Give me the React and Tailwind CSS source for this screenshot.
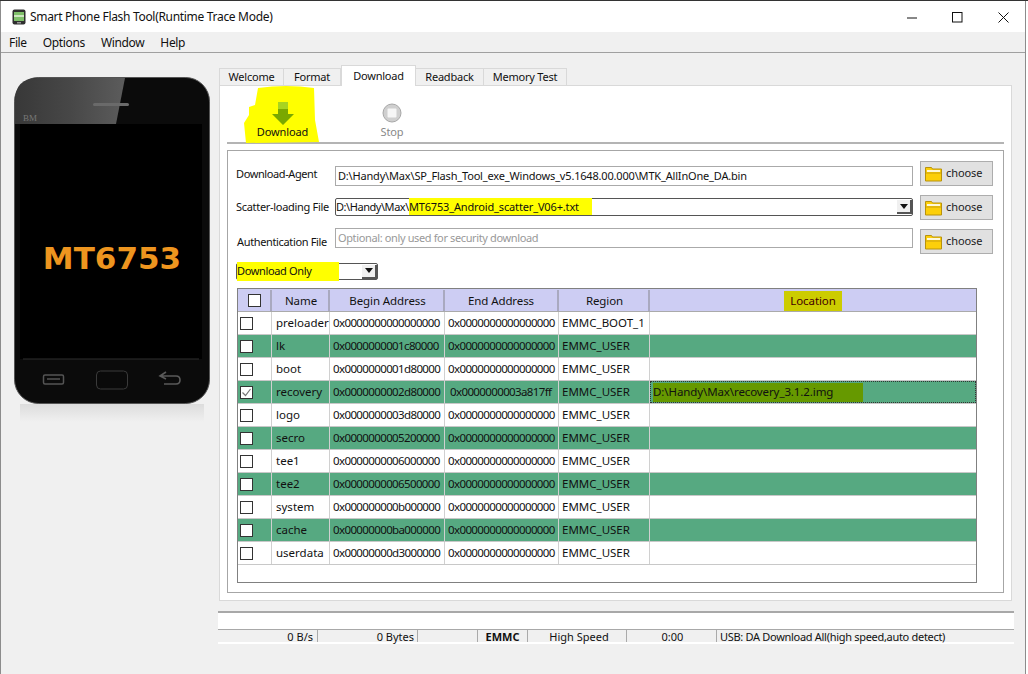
import React from "react";

const rows = [
  ["preloader", "0x0000000000000000", "0x0000000000000000", "EMMC_BOOT_1"],
  ["lk", "0x0000000001c80000", "0x0000000000000000", "EMMC_USER"],
  ["boot", "0x0000000001d80000", "0x0000000000000000", "EMMC_USER"],
  ["recovery", "0x0000000002d80000", "0x0000000003a817ff", "EMMC_USER", "D:\\Handy\\Max\\recovery_3.1.2.img"],
  ["logo", "0x0000000003d80000", "0x0000000000000000", "EMMC_USER"],
  ["secro", "0x0000000005200000", "0x0000000000000000", "EMMC_USER"],
  ["tee1", "0x0000000006000000", "0x0000000000000000", "EMMC_USER"],
  ["tee2", "0x0000000006500000", "0x0000000000000000", "EMMC_USER"],
  ["system", "0x000000000b000000", "0x0000000000000000", "EMMC_USER"],
  ["cache", "0x00000000ba000000", "0x0000000000000000", "EMMC_USER"],
  ["userdata", "0x00000000d3000000", "0x0000000000000000", "EMMC_USER"],
];

const FONT = "font-['Noto_Sans','Liberation_Sans',sans-serif]";
const COLS = "grid grid-cols-[34px_58px_115px_114px_91px_1fr]";

function Folder() {
  return (
    <svg width="17" height="16" viewBox="0 0 17 16">
      <path d="M0.5 1.5h6l1 1.5h9v12h-16z" fill="#fccf0a" stroke="#b8920c" />
      <path d="M2 4h13v2H2z" fill="#fff8d8" />
      <path d="M1 7h15" stroke="#c9a010" />
    </svg>
  );
}

function Choose() {
  return (
    <button className="w-[73px] h-[25px] bg-[#e1e1e1] border border-[#adadad] flex items-center pl-[4px] gap-[4px] text-[11px] tracking-[-0.1px] text-[#222]">
      <Folder />
      <span>choose</span>
    </button>
  );
}

function Check({ checked }) {
  return (
    <div className="w-[13px] h-[13px] border border-[#333] bg-white flex items-center justify-center">
      {checked && (
        <svg width="11" height="11" viewBox="0 0 11 11">
          <path d="M1.5 5.5l3 3 5-6.5" fill="none" stroke="#777" strokeWidth="1.2" />
        </svg>
      )}
    </div>
  );
}

function Arrow() {
  return (
    <div className="w-[15px] h-[14px] bg-[#f0f0f0] border-r-2 border-b-2 border-[#555] flex items-center justify-center">
      <svg width="8" height="5" viewBox="0 0 8 5">
        <path d="M0 0h8L4 5z" fill="#111" />
      </svg>
    </div>
  );
}

function Phone() {
  return (
    <div className="relative w-[196px] h-[345px]">
      <svg width="196" height="345" viewBox="0 0 196 345" className="block">
        <defs>
          <linearGradient id="refl" x1="0" y1="0" x2="0" y2="1">
            <stop offset="0" stopColor="#dcdcdc" />
            <stop offset="1" stopColor="#f0f0f0" />
          </linearGradient>
          <linearGradient id="shine" x1="0" y1="0" x2="1" y2="0">
            <stop offset="0" stopColor="#383838" />
            <stop offset="0.5" stopColor="#474747" />
            <stop offset="1" stopColor="#5c5c5c" />
          </linearGradient>
        </defs>
        <path d="M6 327h184v18H6z" fill="url(#refl)" />
        <rect x="0.5" y="0.5" width="195" height="326" rx="24" fill="#0b0b0b" stroke="#555" />
        <path d="M1 47V24Q1 1 24 1h87l-9 46z" fill="url(#shine)" />
        <rect x="79" y="26" width="36" height="3" rx="1.5" fill="#6a6a6a" />
        <text x="9" y="44" fontFamily="Liberation Serif, serif" fontSize="9" fill="#777">BM</text>
        <rect x="6" y="47" width="182" height="235" fill="#000" />
        <path d="M9 282h176" stroke="#2e2e2e" />
        <rect x="29.5" y="298" width="20" height="9" rx="1.5" fill="none" stroke="#555" strokeWidth="1.5" />
        <path d="M33 302h13" stroke="#555" strokeWidth="1.5" />
        <rect x="82.5" y="294" width="31" height="18" rx="4" fill="#0a0a0a" stroke="#3a3a3a" />
        <path d="M147 299h15q4 0 4 4t-4 4h-12M152 295l-6 4 6 3" fill="none" stroke="#5a5a5a" strokeWidth="1.6" />
      </svg>
      <div className="absolute left-0 right-0 top-[163px] text-center text-[31px] leading-[36px] font-bold text-[#ee951f] font-['DejaVu_Sans',sans-serif]">
        MT6753
      </div>
    </div>
  );
}

function Tab({ children, w, active }) {
  return (
    <div
      className={
        active
          ? "h-[21px] bg-white border border-b-0 border-[#d9d9d9] flex items-center justify-center relative z-10 -mb-[1px] tracking-[-0.2px]"
          : "h-[17px] bg-[#f0f0f0] border border-b-0 border-[#d9d9d9] -ml-px flex items-center justify-center tracking-[-0.2px]"
      }
      style={{ width: w }}
    >
      {children}
    </div>
  );
}

export default function App() {
  return (
    <div className={`w-[1028px] h-[674px] overflow-hidden bg-white text-[12px] text-[#111] ${FONT}`}>
      <div className="h-px bg-[#333]" />
      <div className="w-[1026px] h-[673px] bg-[#f0f0f0] border-l border-r border-[#8c8c8c] flex flex-col">
        {/* title */}
        <div className="h-[31px] bg-white flex items-center shrink-0">
          <svg width="14" height="16" viewBox="0 0 14 16" className="ml-[11px]">
            <rect x="0.5" y="0.5" width="13" height="15" rx="2" fill="#2f2f2f" />
            <rect x="2" y="3" width="10" height="9" fill="#7fc06a" />
            <path d="M2 7h10" stroke="#e8f5e0" strokeWidth="1.5" />
            <rect x="5" y="13" width="4" height="1.5" fill="#999" />
          </svg>
          <span className="ml-[4px] text-[12px] tracking-[-0.31px]">Smart Phone Flash Tool(Runtime Trace Mode)</span>
          <div className="ml-auto flex items-center mt-[1px]">
            <svg width="11" height="11" viewBox="0 0 11 11" className="mr-[34px]"><path d="M0 6h10" stroke="#111" /></svg>
            <svg width="11" height="11" viewBox="0 0 11 11" className="mr-[35px]"><rect x="0.5" y="0.5" width="9.5" height="9.5" fill="none" stroke="#111" /></svg>
            <svg width="11" height="11" viewBox="0 0 11 11" className="mr-[16px]"><path d="M0.5 0.5l10 10M10.5 0.5l-10 10" stroke="#111" /></svg>
          </div>
        </div>
        {/* menu */}
        <div className="h-[22px] shrink-0 border-b border-[#a0a0a0] flex items-center pl-[8px] gap-[16px] -mt-px pt-[3px] tracking-[-0.35px]">
          <span>File</span>
          <span>Options</span>
          <span>Window</span>
          <span>Help</span>
        </div>
        {/* body */}
        <div className="flex flex-1 min-h-0">
          <div className="w-[217px] shrink-0 pl-[13px] pt-[24px]">
            <Phone />
          </div>
          <div className="w-[796px] shrink-0 flex flex-col pl-[1px]">
            <div className="h-[32px] flex items-end pl-[1px] text-[11px]">
              <Tab w={65}>Welcome</Tab>
              <Tab w={58}>Format</Tab>
              <Tab w={75} active>Download</Tab>
              <Tab w={69}>Readback</Tab>
              <Tab w={84}>Memory Test</Tab>
            </div>
            <div className="w-[793px] h-[516px] bg-white border border-[#d9d9d9] px-[7px] flex flex-col">
              {/* toolbar */}
              <div className="h-[58px] shrink-0 border-b-2 border-[#b4b4b4] flex text-[11px] tracking-[-0.1px] relative">
                <svg width="76" height="60" viewBox="0 0 76 60" className="absolute left-[17px] top-0">
                  <path d="M14 2q28 -4 56 0l1 32 4 22-73 1-2-20 5-8 0-8 6-2z" fill="#ffff00" />
                </svg>
                <div className="relative w-[110px] flex flex-col items-center pt-[16px]">
                  <svg width="22" height="24" viewBox="0 0 22 24" className="ml-[2px]">
                    <path d="M6 0h10v12h6L11 23 0 12h6z" fill="#7aa800" />
                    <path d="M6 0h10v7H6z" fill="#a8d420" />
                  </svg>
                  <span className="-mt-[2px] ml-[1px] leading-[16px]">Download</span>
                </div>
                <div className="w-[110px] flex flex-col items-center pt-[16px] text-[#888]">
                  <svg width="20" height="20" viewBox="0 0 20 20" className="mt-[1px]">
                    <circle cx="10" cy="10" r="9" fill="#cfcfcf" stroke="#a8a8a8" />
                    <rect x="5.5" y="5.5" width="9" height="9" rx="1" fill="#f6f6f6" />
                  </svg>
                  <span className="mt-[1px] leading-[16px]">Stop</span>
                </div>
              </div>
              {/* group */}
              <div className="mt-[6px] h-[443px] border border-[#a6a6a6] pl-[8px] pr-[9px] pt-[10px] text-[11px] flex flex-col">
                <div className="h-[25px] flex items-center">
                  <span className="w-[99px] mt-[1px] tracking-[-0.4px]">Download-Agent</span>
                  <div className="w-[578px] h-[20px] self-start mt-[5px] border border-[#aaa] flex items-center pl-[2px] tracking-[-0.18px] whitespace-nowrap">
                    D:\Handy\Max\SP_Flash_Tool_exe_Windows_v5.1648.00.000\MTK_AllInOne_DA.bin
                  </div>
                  <div className="ml-[7px]"><Choose /></div>
                </div>
                <div className="h-[25px] mt-[9px] flex items-center">
                  <span className="w-[99px] tracking-[-0.3px]">Scatter-loading File</span>
                  <div className="w-[578px] h-[18px] self-start mt-[3px] border border-[#555] rounded-[2px] flex items-center justify-between">
                    <span className="tracking-[-0.15px]">
                      <span className="tracking-[-0.45px]">D:\Handy\Max\</span>
                      <span className="bg-[#ffff00] py-[1px] pr-[13px]">MT6753_Android_scatter_V06+.txt</span>
                    </span>
                    <Arrow />
                  </div>
                  <div className="ml-[7px]"><Choose /></div>
                </div>
                <div className="h-[25px] mt-[9px] flex items-center">
                  <span className="w-[99px] mt-[1px] tracking-[-0.35px] pl-[1px]">Authentication File</span>
                  <div className="w-[578px] h-[20px] self-start -mt-[1px] border border-[#aaa] flex items-center pl-[2px] text-[#999] tracking-[-0.37px]">
                    Optional: only used for security download
                  </div>
                  <div className="ml-[7px]"><Choose /></div>
                </div>
                <div className="w-[142px] h-[17px] mt-[9px] border border-[#555] rounded-[2px] flex items-center justify-between shrink-0">
                  <span className="bg-[#ffff00] w-[102px] h-[19px] flex items-center tracking-[-0.35px]">Download Only</span>
                  <Arrow />
                </div>
                <div className="w-[740px] h-[295px] mt-[8px] ml-[1px] border border-[#808080] bg-white text-[11.5px] shrink-0">
                  <div className={`${COLS} h-[23px] bg-[#cdcdf3] border-b border-[#aaa] tracking-[-0.1px] pt-[1px]`}>
                    <div className="flex items-center justify-center border-r-2 border-[#a9a9c0]"><Check /></div>
                    <div className="flex items-center justify-center border-r-2 border-[#a9a9c0] pl-[2px]">Name</div>
                    <div className="flex items-center justify-center border-r-2 border-[#a9a9c0] pl-[2px]">Begin Address</div>
                    <div className="flex items-center justify-center border-r-2 border-[#a9a9c0]">End Address</div>
                    <div className="flex items-center justify-center border-r-2 border-[#a9a9c0] pl-[2px]">Region</div>
                    <div className="flex items-center justify-center">
                      <span className="bg-[#cccc00] px-[6px] h-[20px] flex items-center text-[#400]">Location</span>
                    </div>
                  </div>
                  {rows.map((r, i) => {
                    const green = i % 2 === 1;
                    return (
                      <div
                        key={r[0]}
                        className={`${COLS} h-[23px] border-b border-[#c8c8c8] ${green ? "bg-[#56a981]" : "bg-white"}`}
                      >
                        <div className="flex items-center pl-[2px] border-r border-[#d0d0d0]">
                          <Check checked={!!r[4]} />
                        </div>
                        <div className="flex items-center pl-[4px] border-r border-[#d0d0d0]">{r[0]}</div>
                        <div className="flex items-center pl-[3px] border-r border-[#d0d0d0] whitespace-nowrap tracking-[-0.62px]">{r[1]}</div>
                        <div className={`flex items-center border-r border-[#d0d0d0] whitespace-nowrap tracking-[-0.62px] ${r[4] ? "pl-[5px]" : "pl-[3px]"}`}>{r[2]}</div>
                        <div className="flex items-center pl-[3px] border-r border-[#d0d0d0] whitespace-nowrap">{r[3]}</div>
                        <div className={`flex items-center pl-[2px] ${r[4] ? "border border-dotted border-[#333]" : ""}`}>
                          {r[4] && <span className="bg-[#669900] h-[19px] w-[210px] flex items-center tracking-[-0.1px]">{r[4]}</span>}
                        </div>
                      </div>
                    );
                  })}
                </div>
              </div>
            </div>
            {/* progress */}
            <div className="mt-[10px] w-[796px] h-[18px] bg-white border-t-2 border-[#a8a8a8] -ml-px" />
            <div className="w-[796px] h-[15px] -ml-px bg-[#f0f0f0] border-t border-b-2 border-[#a8a8a8] border-b-white flex text-[11px] leading-[13px]">
              <div className="w-[100px] border-r border-[#aaa] text-right pr-[4px]">0 B/s</div>
              <div className="w-[100px] border-r border-[#aaa] text-right pr-[3px]">0 Bytes</div>
              <div className="w-[60px] border-r border-[#aaa]" />
              <div className="w-[50px] border-r border-[#aaa] text-center font-bold">EMMC</div>
              <div className="w-[99px] border-r border-[#aaa] text-center pl-[4px]">High Speed</div>
              <div className="w-[90px] border-r border-[#aaa] text-center pl-[2px]">0:00</div>
              <div className="flex-1 pl-[3px] whitespace-nowrap tracking-[-0.3px]">USB: DA Download All(high speed,auto detect)</div>
            </div>
          </div>
        </div>
      </div>
    </div>
  );
}
